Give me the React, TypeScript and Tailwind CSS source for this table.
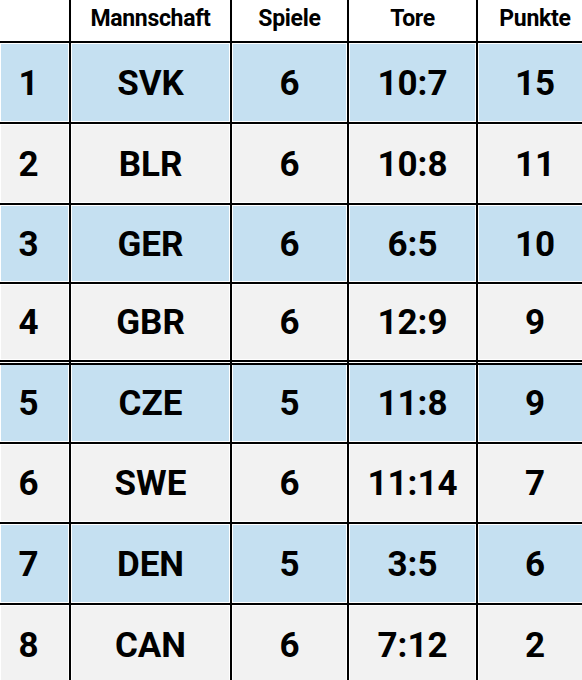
const rows = [
  { pos: "1", team: "SVK", games: "6", goals: "10:7", pts: "15", h: 79 },
  { pos: "2", team: "BLR", games: "6", goals: "10:8", pts: "11", h: 79 },
  { pos: "3", team: "GER", games: "6", goals: "6:5", pts: "10", h: 77 },
  { pos: "4", team: "GBR", games: "6", goals: "12:9", pts: "9", h: 76 },
  { pos: "5", team: "CZE", games: "5", goals: "11:8", pts: "9", h: 80 },
  { pos: "6", team: "SWE", games: "6", goals: "11:14", pts: "7", h: 78 },
  { pos: "7", team: "DEN", games: "5", goals: "3:5", pts: "6", h: 79 },
  { pos: "8", team: "CAN", games: "6", goals: "7:12", pts: "2", h: 79 },
];

function Cell({ children, blue, split, first }: { children: string; blue: boolean; split: boolean; first?: boolean }) {
  return (
    <div className={`flex flex-col border border-white ${blue ? "bg-[#c5e0f1]" : "bg-[#f2f2f2]"}`}>
      {split && <div className="h-[2px] -mx-[1px] bg-black" />}
      <div className={`flex flex-1 items-center justify-center pt-[3px] text-[35px] font-bold ${first ? "pr-[12px]" : ""}`}>
        {children}
      </div>
    </div>
  );
}

export default function App() {
  const heads = ["", "Mannschaft", "Spiele", "Tore", "Punkte"];
  return (
    <div className="w-[582px] h-[680px] overflow-hidden bg-white text-black" style={{ fontFamily: "Roboto, 'Liberation Sans', sans-serif" }}>
      <div className="w-[592px] flex flex-col gap-[2px] bg-black">
        <div className="grid grid-cols-[69px_159px_115px_127px_114px] gap-x-[2px] h-[41px]">
          {heads.map((t, i) => (
            <div key={i} className="bg-white flex items-end justify-center pb-[5px] text-[23px] font-bold tracking-[-0.3px]">
              {t}
            </div>
          ))}
        </div>
        {rows.map((r, i) => {
          const blue = i % 2 === 0;
          const split = i === 4;
          return (
            <div
              key={r.pos}
              className="grid grid-cols-[69px_159px_115px_127px_114px] gap-x-[2px]"
              style={{ height: r.h }}
            >
              <Cell blue={blue} split={split} first>{r.pos}</Cell>
              <Cell blue={blue} split={split}>{r.team}</Cell>
              <Cell blue={blue} split={split}>{r.games}</Cell>
              <Cell blue={blue} split={split}>{r.goals}</Cell>
              <Cell blue={blue} split={split}>{r.pts}</Cell>
            </div>
          );
        })}
      </div>
    </div>
  );
}
